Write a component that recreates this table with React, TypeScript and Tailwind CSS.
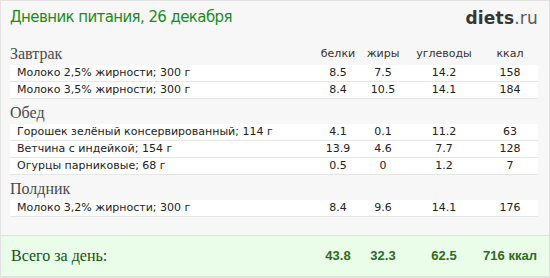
const sections = [
  {
    title: "Завтрак",
    rows: [
      { name: "Молоко 2,5% жирности; 300 г", p: "8.5", f: "7.5", c: "14.2", k: "158" },
      { name: "Молоко 3,5% жирности; 300 г", p: "8.4", f: "10.5", c: "14.1", k: "184" },
    ],
  },
  {
    title: "Обед",
    rows: [
      { name: "Горошек зелёный консервированный; 114 г", p: "4.1", f: "0.1", c: "11.2", k: "63" },
      { name: "Ветчина с индейкой; 154 г", p: "13.9", f: "4.6", c: "7.7", k: "128" },
      { name: "Огурцы парниковые; 68 г", p: "0.5", f: "0", c: "1.2", k: "7" },
    ],
  },
  {
    title: "Полдник",
    rows: [{ name: "Молоко 3,2% жирности; 300 г", p: "8.4", f: "9.6", c: "14.1", k: "176" }],
  },
];

const sans = "font-['DejaVu_Sans',Verdana,sans-serif]";
const serif = "font-['Liberation_Serif',Georgia,serif]";

function Cols({ p, f, c, k }: { p: string; f: string; c: string; k: string }) {
  return (
    <>
      <span className="w-[44px] text-center">{p}</span>
      <span className="w-[46px] text-center">{f}</span>
      <span className="w-[76px] text-center">{c}</span>
      <span className="w-[56px] text-center">{k}</span>
    </>
  );
}

export default function App() {
  return (
    <div className="flex h-[278px] w-[550px] flex-col border border-[#e2e2e2] bg-[#f7f7f7]">
      <header className="flex h-[41px] items-start justify-between pl-[9px] pr-[11px] pt-[6px]">
        <h1 className={`${sans} text-[15px] leading-[20px] tracking-[-0.6px] text-[#1a8c1c]`}>
          Дневник питания, 26 декабря
        </h1>
        <span className={`${sans} pt-[1px] text-[17px] leading-[20px] tracking-[0.2px] text-[#363636]`}>
          <span className="font-bold">diets</span>
          <span className="text-[#5a5a5a]">.ru</span>
        </span>
      </header>

      <main className="flex flex-1 flex-col pl-[9px] pr-[11px]">
        {sections.map((s, i) => (
          <section key={s.title}>
            <div className={`flex items-end ${i === 0 ? "h-[23px]" : "h-[25px]"} pb-[2px]`}>
              <h2 className={`${serif} flex-1 text-[16px] leading-[18px] text-[#4a4a4a]`}>{s.title}</h2>
              {i === 0 && (
                <div className={`${sans} flex pb-[2px] text-[11px] leading-[14px] text-[#333]`}>
                  <Cols p="белки" f="жиры" c="углеводы" k="ккал" />
                </div>
              )}
            </div>
            {s.rows.map((r) => (
              <div
                key={r.name}
                className={`${sans} flex h-[17px] items-center border-b border-[#e6e6e6] bg-white text-[11px] text-[#222]`}
              >
                <span className="flex-1 pl-[7px]">{r.name}</span>
                <Cols p={r.p} f={r.f} c={r.c} k={r.k} />
              </div>
            ))}
          </section>
        ))}
      </main>

      <footer className="flex h-[42px] items-center border-y border-[#e0e0e0] bg-[#e9fde9] pl-[9px] pr-[11px]">
        <span className={`${serif} flex-1 pl-[1px] text-[16px] text-[#0f5410]`}>Всего за день:</span>
        <div className="flex font-['Liberation_Sans',Arial,sans-serif] text-[13px] font-bold text-[#2d6b1f]">
          <Cols p="43.8" f="32.3" c="62.5" k="716 ккал" />
        </div>
      </footer>
    </div>
  );
}
